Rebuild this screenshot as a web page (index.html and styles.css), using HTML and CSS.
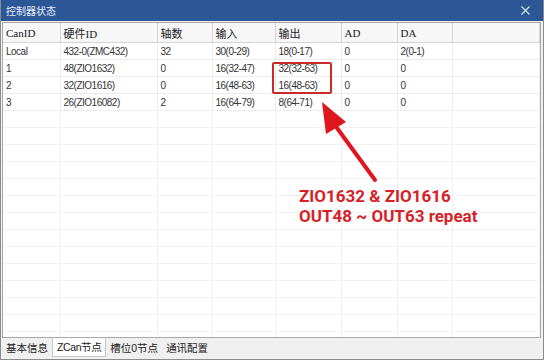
FILE: index.html
```html
<!DOCTYPE html>
<html lang="zh">
<head>
    <meta charset="UTF-8">
    <title>控制器状态</title>
    <link rel="stylesheet" href="styles.css">
</head>
<body>
    <div class="window">
        <div class="titlebar">
            <span class="title">控制器状态</span>
            <svg class="close" width="9" height="9" viewBox="0 0 9 9">
                <path d="M0.5 0.5 L8.5 8.5 M8.5 0.5 L0.5 8.5" stroke="#dfe7f3" stroke-width="1.1" fill="none"/>
            </svg>
        </div>
        <div class="grid">
            <table class="nodes">
                <colgroup>
                    <col style="width:57px">
                    <col style="width:97px">
                    <col style="width:55px">
                    <col style="width:63px">
                    <col style="width:66px">
                    <col style="width:56px">
                    <col style="width:55px">
                    <col>
                </colgroup>
                <thead>
                    <tr>
                        <th>CanID</th>
                        <th>硬件ID</th>
                        <th>轴数</th>
                        <th>输入</th>
                        <th>输出</th>
                        <th>AD</th>
                        <th>DA</th>
                        <th></th>
                    </tr>
                </thead>
                <tbody>
                    <tr><td>Local</td><td>432-0(ZMC432)</td><td>32</td><td>30(0-29)</td><td>18(0-17)</td><td>0</td><td>2(0-1)</td><td></td></tr>
                    <tr><td>1</td><td>48(ZIO1632)</td><td>0</td><td>16(32-47)</td><td>32(32-63)</td><td>0</td><td>0</td><td></td></tr>
                    <tr><td>2</td><td>32(ZIO1616)</td><td>0</td><td>16(48-63)</td><td>16(48-63)</td><td>0</td><td>0</td><td></td></tr>
                    <tr><td>3</td><td>26(ZIO16082)</td><td>2</td><td>16(64-79)</td><td>8(64-71)</td><td>0</td><td>0</td><td></td></tr>
                    <tr class="empty"><td></td><td></td><td></td><td></td><td></td><td></td><td></td><td></td></tr>
                    <tr class="empty"><td></td><td></td><td></td><td></td><td></td><td></td><td></td><td></td></tr>
                    <tr class="empty"><td></td><td></td><td></td><td></td><td></td><td></td><td></td><td></td></tr>
                    <tr class="empty"><td></td><td></td><td></td><td></td><td></td><td></td><td></td><td></td></tr>
                    <tr class="empty"><td></td><td></td><td></td><td></td><td></td><td></td><td></td><td></td></tr>
                    <tr class="empty"><td></td><td></td><td></td><td></td><td></td><td></td><td></td><td></td></tr>
                    <tr class="empty"><td></td><td></td><td></td><td></td><td></td><td></td><td></td><td></td></tr>
                    <tr class="empty"><td></td><td></td><td></td><td></td><td></td><td></td><td></td><td></td></tr>
                    <tr class="empty"><td></td><td></td><td></td><td></td><td></td><td></td><td></td><td></td></tr>
                    <tr class="empty"><td></td><td></td><td></td><td></td><td></td><td></td><td></td><td></td></tr>
                    <tr class="empty"><td></td><td></td><td></td><td></td><td></td><td></td><td></td><td></td></tr>
                    <tr class="empty"><td></td><td></td><td></td><td></td><td></td><td></td><td></td><td></td></tr>
                    <tr class="empty"><td></td><td></td><td></td><td></td><td></td><td></td><td></td><td></td></tr>
                    <tr class="empty"><td></td><td></td><td></td><td></td><td></td><td></td><td></td><td></td></tr>
                </tbody>
            </table>

            <!-- annotation drawn over the grid -->
            <div class="mark-box"></div>
            <svg class="mark-arrow" width="80" height="90" viewBox="0 0 80 90">
                <path d="M56 80 L18 28" stroke="#e0161e" stroke-width="4" stroke-linecap="round" fill="none"/>
                <polygon points="3,2 7,34 27,22" fill="#e0161e"/>
            </svg>
            <div class="mark-text">ZIO1632 &amp; ZIO1616<br>OUT48 ~ OUT63 repeat</div>
        </div>
        <div class="tabs">
            <span class="tab">基本信息</span>
            <span class="tab active">ZCan节点</span>
            <span class="tab">槽位0节点</span>
            <span class="tab">通讯配置</span>
        </div>
    </div>
</body>
</html>
```

FILE: styles.css
```css
body{
    margin: 0;
    background-color: #f0f0f0;
}

.window{
    width: 544px;
    height: 360px;
    box-sizing: border-box;
    border: 1px solid #8c8c8c;
    border-top: none;
    background-color: #f0f0f0;
    display: flex;
    flex-direction: column;
    overflow: hidden;
}

.titlebar{
    height: 21px;
    margin: 0 -1px;
    background-color: #2b5797;
    display: flex;
    align-items: center;
    justify-content: space-between;
    padding: 0 14px 0 6px;
    flex-shrink: 0;
}

.title{
    color: #e8eef7;
    font-family: "Noto Sans CJK SC", sans-serif;
    font-size: 10px;
}

.close{
    display: block;
}

.grid{
    position: relative;
    height: 314px;
    margin: 1px 2px 0 1px;
    border: 1px solid #a9a9a9;
    background-color: #fff;
    overflow: hidden;
    flex-shrink: 0;
}

.nodes{
    width: 537px;
    table-layout: fixed;
    border-collapse: collapse;
}

.nodes th{
    height: 19px;
    padding: 0 0 0 3px;
    text-align: left;
    font-family: "Liberation Serif", "Noto Sans CJK SC", serif;
    font-weight: normal;
    font-size: 11px;
    color: #222;
    background-color: #f7f7f7;
    border-right: 1px solid #d4d4d4;
    border-bottom: 1px solid #d4d4d4;
}

.nodes td{
    height: 16px;
    padding: 0 0 0 3px;
    font-family: "Liberation Sans", "Noto Sans CJK SC", sans-serif;
    font-size: 10px;
    letter-spacing: -0.5px;
    color: #333;
    white-space: nowrap;
    border-right: 1px solid #ececec;
    border-bottom: 1px solid #ececec;
}

.nodes .empty td{
    border-color: #f2f2f2;
}

.mark-box{
    position: absolute;
    left: 269px;
    top: 39px;
    width: 56px;
    height: 28px;
    border: 2px solid #cc2a2a;
    border-radius: 2px;
}

.mark-arrow{
    position: absolute;
    left: 316px;
    top: 77px;
}

.mark-text{
    position: absolute;
    left: 296px;
    top: 163px;
    font-family: Roboto, "Liberation Sans", sans-serif;
    font-weight: bold;
    font-size: 17px;
    line-height: 20px;
    color: #d71f27;
}

.tabs{
    height: 19px;
    display: flex;
    align-items: stretch;
    padding-left: 1px;
    font-family: "Liberation Sans", "Noto Sans CJK SC", sans-serif;
    font-size: 10.5px;
    color: #222;
}

.tab{
    padding: 0 4px;
    display: flex;
    align-items: center;
}

.tab.active{
    background-color: #fff;
    border: 1px solid #c8c8c8;
    border-top: none;
    margin-top: -1px;
    letter-spacing: -0.4px;
}
```
